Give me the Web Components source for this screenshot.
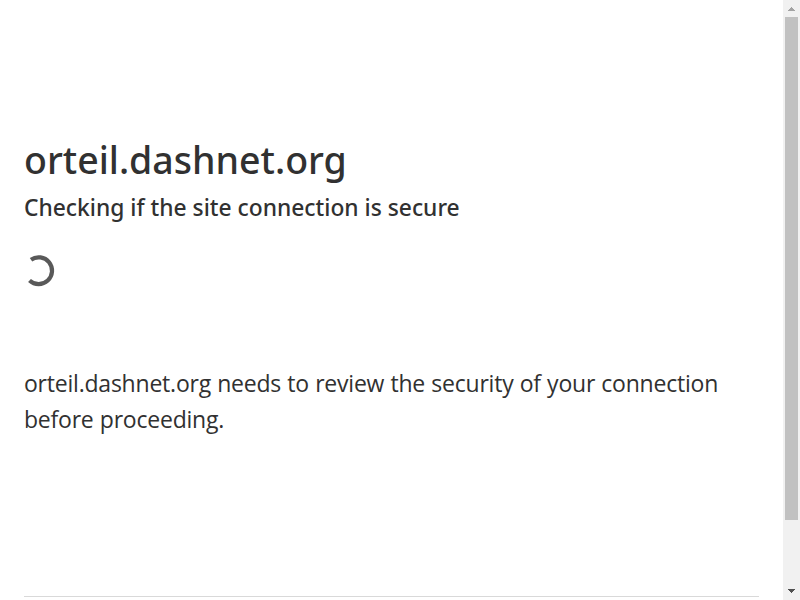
<!DOCTYPE html>
<html lang="en"><head><meta charset="utf-8"><title>Security check</title>
<style>html,body{margin:0;height:100%;overflow:hidden;background:#fff}</style></head>
<body><check-page></check-page>
<script>
const define=(name,html)=>customElements.define(name,class extends HTMLElement{constructor(){super();this.attachShadow({mode:'open'}).innerHTML=html;}});
define('load-ring',`<style>:host{display:block;width:32px;height:32px}svg{display:block;overflow:visible}</style>
<svg width="32" height="32" viewBox="0 0 32 32"><path d="M7 3.7A13.4 13.4 0 1 1 5.5 24.5" fill="none" stroke="#595959" stroke-width="4.2"/></svg>`);
define('scroll-bar',`<style>:host{display:flex;flex-direction:column;width:17px;height:600px;background:#f1f1f1}
svg{display:block;flex:none}.track{flex:1}.thumb{width:13px;height:503px;margin-left:2px;background:#c1c1c1}</style>
<svg width="17" height="17" shape-rendering="crispEdges"><path d="M8 7h1v1h1v1h1v1h1v1H5v-1h1V9h1V8h1z" fill="#a3a3a3"/></svg><div class="track"><div class="thumb"></div></div><svg width="17" height="17" shape-rendering="crispEdges"><path d="M5 6h7v1h-1v1h-1v1H9v1H8V9H7V8H6V7H5z" fill="#505050"/></svg>`);
define('check-page',`<style>:host{display:flex;height:600px;font-family:"Noto Sans","Open Sans",sans-serif;color:#313131}
main{flex:1;box-sizing:border-box;padding:130px 24px 0;overflow:hidden}
h1,h2,p{margin:0;white-space:nowrap}
h1{font-size:37.5px;line-height:60px;font-weight:500}
h2{font-size:22.8px;line-height:36px;font-weight:500}
load-ring{margin:30px 0 77px}
p{font-family:"Open Sans","Noto Sans",sans-serif;font-size:23px;line-height:36px;font-weight:400;letter-spacing:-.22px;word-spacing:.5px}
footer{margin-top:159px;border-top:1px solid #d9d9d9}</style>
<main><h1><span>orteil.dashnet.org</span></h1><h2><span>Checking if the site connection is secure</span></h2><load-ring></load-ring><p><span>orteil.dashnet.org needs to review the security of your connection</span><br><span>before proceeding.</span></p><footer></footer></main><scroll-bar></scroll-bar>`);
</script></body></html>
